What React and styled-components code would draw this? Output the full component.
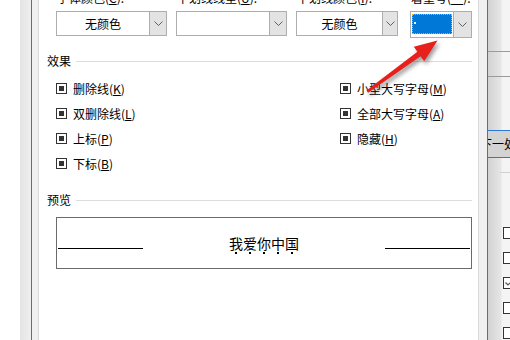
import React from "react";
import styled, { createGlobalStyle } from "styled-components";

const GlobalStyle = createGlobalStyle`
  html, body {
    margin: 0;
    padding: 0;
    background: #fff;
  }
  body {
    font-family: "Noto Sans CJK SC", "Noto Sans", sans-serif;
    font-size: 12px;
    color: #000;
    overflow: hidden;
  }
`;

const Screen = styled.div`
  position: relative;
  display: flex;
  width: 510px;
  height: 340px;
  overflow: hidden;
  background: #fff;
`;

const Desk = styled.div`
  width: 20px;
  flex: none;
  background: #fff;
`;

const LeftFrame = styled.div`
  width: 19px;
  flex: none;
  background: linear-gradient(
    to right,
    #e4e4e4 0,
    #efefef 11px,
    #2b79d0 11px,
    #2b79d0 12px,
    #f0f0f0 12px,
    #f0f0f0 18px,
    #d8d8d8 18px
  );
`;

const Dialog = styled.div`
  width: 439px;
  flex: none;
  box-sizing: border-box;
  padding: 0 6px 0 8px;
  display: flex;
  flex-direction: column;
  background: #fff;
`;

const FieldGrid = styled.div`
  display: grid;
  grid-template-columns: 120px 120px 114px 62px;
  margin-left: 9px;
`;

const FieldLabel = styled.div`
  margin-top: -10px;
  height: 16px;
  line-height: 16px;
  padding-left: 1px;
  white-space: nowrap;
`;

const ComboCell = styled.div`
  margin-top: 5px;
  height: 27px;
`;

const Combo = styled.div`
  display: flex;
  width: ${(p) => p.$w}px;
  height: ${(p) => p.$h}px;
  box-sizing: border-box;
  border: 1px solid #adadad;
  background: #fff;
`;

const ComboValue = styled.div`
  flex: 1;
  display: flex;
  align-items: center;
  justify-content: center;
  line-height: 16px;
  padding: ${(p) => (p.$swatch ? "2px 1px 3px 1px" : "0")};
`;

const Swatch = styled.div`
  position: relative;
  width: 100%;
  height: 100%;
  box-sizing: border-box;
  background: #0078d7;
  border: 1px dotted #f5a623;

  &::before {
    content: "";
    position: absolute;
    left: 1px;
    top: 7px;
    width: 2px;
    height: 2px;
    background: #fff;
  }
`;

const ComboButton = styled.div`
  width: ${(p) => p.$w}px;
  flex: none;
  box-sizing: border-box;
  border-left: 1px solid #adadad;
  background: #e3e3e3;
  display: flex;
  align-items: center;
  justify-content: center;
`;

const GroupHeader = styled.div`
  display: flex;
  align-items: center;
  gap: 5px;
  height: 16px;
  line-height: 16px;
  margin-top: ${(p) => p.$top}px;
`;

const GroupRule = styled.div`
  flex: 1;
  height: 1px;
  background: #dcdcdc;
`;

const EffectsGrid = styled.div`
  display: grid;
  grid-template-columns: 284px auto;
  grid-auto-flow: column;
  grid-template-rows: repeat(4, 25px);
  margin: 7px 0 0 9px;
`;

const CheckRow = styled.label`
  display: flex;
  align-items: center;
  gap: 6px;
  height: 25px;
  white-space: nowrap;
`;

const TriBox = styled.span`
  width: 11px;
  height: 11px;
  flex: none;
  box-sizing: border-box;
  border: 1px solid #333;
  padding: 2px;
  background: #fff;

  &::after {
    content: "";
    display: block;
    width: 5px;
    height: 5px;
    background: #333;
  }
`;

const PreviewBox = styled.div`
  display: flex;
  align-items: flex-start;
  height: 52px;
  box-sizing: border-box;
  margin: 9px 0 0 9px;
  padding: 0 1px 0 1px;
  border: 1px solid #6b6b6b;
`;

const PreviewRule = styled.div`
  width: 85px;
  height: 1px;
  flex: none;
  margin-top: 30px;
  background: #000;
`;

const Sample = styled.div`
  flex: 1;
  text-align: center;
  font-size: 14px;
  line-height: 16px;
  margin-top: 17px;
`;

const Dotted = styled.span`
  position: relative;

  &::after {
    content: "";
    position: absolute;
    left: 50%;
    bottom: -1px;
    width: 2px;
    height: 2px;
    margin-left: -1px;
    background: #000;
  }
`;

const RightEdge = styled.div`
  width: 9px;
  flex: none;
  box-sizing: border-box;
  border-left: 1px solid #d9d9d9;
  background: #f0f0f0;
`;

const BackWindow = styled.div`
  width: 23px;
  flex: none;
  box-sizing: border-box;
  border-left: 1px solid #2b79d0;
  display: flex;
  flex-direction: column;
  overflow: hidden;
  background: linear-gradient(to right, #d2d2d2 0, #e6e6e6 13px, #f4f4f4 14px);
`;

const BackRule = styled.div`
  height: 1px;
  flex: none;
  margin-top: ${(p) => p.$top}px;
  margin-left: ${(p) => p.$left || 0}px;
  background: ${(p) => p.$color};
`;

const NextButton = styled.div`
  height: 28px;
  flex: none;
  box-sizing: border-box;
  margin-top: 53px;
  border-top: 1px solid #2b79d0;
  border-bottom: 1px solid #2b79d0;
  background: #d3d3d3;
  line-height: 26px;
  white-space: nowrap;
  text-indent: -8px;
`;

const BackChecks = styled.div`
  display: flex;
  flex-direction: column;
  gap: 13px;
  margin: 54px 0 0 15px;
`;

const BackCheck = styled.div`
  width: 12px;
  height: 12px;
  flex: none;
  box-sizing: border-box;
  border: 1px solid #333;
  background: #fff;
  display: flex;
  align-items: center;
  justify-content: center;
`;

const ArrowLayer = styled.svg`
  position: absolute;
  left: 0;
  top: 0;
  pointer-events: none;
  filter: drop-shadow(2px 3px 2px rgba(0, 0, 0, 0.4));
`;

const Chevron = () => (
  <svg width="9" height="5" viewBox="0 0 9 5">
    <polyline points="0.5,0.5 4.5,4.5 8.5,0.5" fill="none" stroke="#606060" strokeWidth="1" />
  </svg>
);

const fields = [
  { label: <>字体颜色(<u>C</u>):</>, value: "无颜色", w: 111, h: 25, btn: 17 },
  { label: <>下划线线型(<u>U</u>):</>, value: "", w: 111, h: 25, btn: 17 },
  { label: <>下划线颜色(<u>I</u>):</>, value: "无颜色", w: 102, h: 25, btn: 15 },
  { label: <>着重号(<u>·</u>):</>, swatch: true, w: 62, h: 27, btn: 18 },
];

const effects = [
  ["删除线(", "K", ")"],
  ["双删除线(", "L", ")"],
  ["上标(", "P", ")"],
  ["下标(", "B", ")"],
  ["小型大写字母(", "M", ")"],
  ["全部大写字母(", "A", ")"],
  ["隐藏(", "H", ")"],
];

const App = () => (
  <>
    <GlobalStyle />
    <Screen>
      <Desk />
      <LeftFrame />
      <Dialog>
        <FieldGrid>
          {fields.map((f, i) => (
            <FieldLabel key={"l" + i}>{f.label}</FieldLabel>
          ))}
          {fields.map((f, i) => (
            <ComboCell key={"c" + i}>
              <Combo $w={f.w} $h={f.h}>
                <ComboValue $swatch={f.swatch}>
                  {f.swatch ? <Swatch /> : f.value}
                </ComboValue>
                <ComboButton $w={f.btn}>
                  <Chevron />
                </ComboButton>
              </Combo>
            </ComboCell>
          ))}
        </FieldGrid>

        <GroupHeader $top={15}>
          <span>效果</span>
          <GroupRule />
        </GroupHeader>
        <EffectsGrid>
          {effects.map(([a, key, b], i) => (
            <CheckRow key={i}>
              <TriBox />
              <span>
                {a}
                <u>{key}</u>
                {b}
              </span>
            </CheckRow>
          ))}
        </EffectsGrid>

        <GroupHeader $top={16}>
          <span>预览</span>
          <GroupRule />
        </GroupHeader>
        <PreviewBox>
          <PreviewRule />
          <Sample>
            {"我爱你中国".split("").map((ch, i) => (
              <Dotted key={i}>{ch}</Dotted>
            ))}
          </Sample>
          <PreviewRule />
        </PreviewBox>
      </Dialog>

      <RightEdge />
      <BackWindow>
        <BackRule $top={51} $color="#9a9a9a" />
        <BackRule $top={24} $color="#9a9a9a" />
        <NextButton>下一处</NextButton>
        <BackRule $top={14} $left={12} $color="#d0d0d0" />
        <BackChecks>
          {[0, 1, 2, 3, 4].map((i) => (
            <BackCheck key={i}>
              {i === 2 && (
                <svg width="8" height="6" viewBox="0 0 8 6">
                  <polyline points="0.5,2.5 3,5 7.5,0.5" fill="none" stroke="#555" strokeWidth="1.2" />
                </svg>
              )}
            </BackCheck>
          ))}
        </BackChecks>
      </BackWindow>

      <ArrowLayer width="510" height="340" viewBox="0 0 510 340">
        <polygon
          points="366.4,90.5 417.4,51.8 413.8,46.8 437.5,40.5 424.2,61.2 420.6,56.2 368.6,92.5"
          fill="#e8201c"
        />
      </ArrowLayer>
    </Screen>
  </>
);

export default App;
